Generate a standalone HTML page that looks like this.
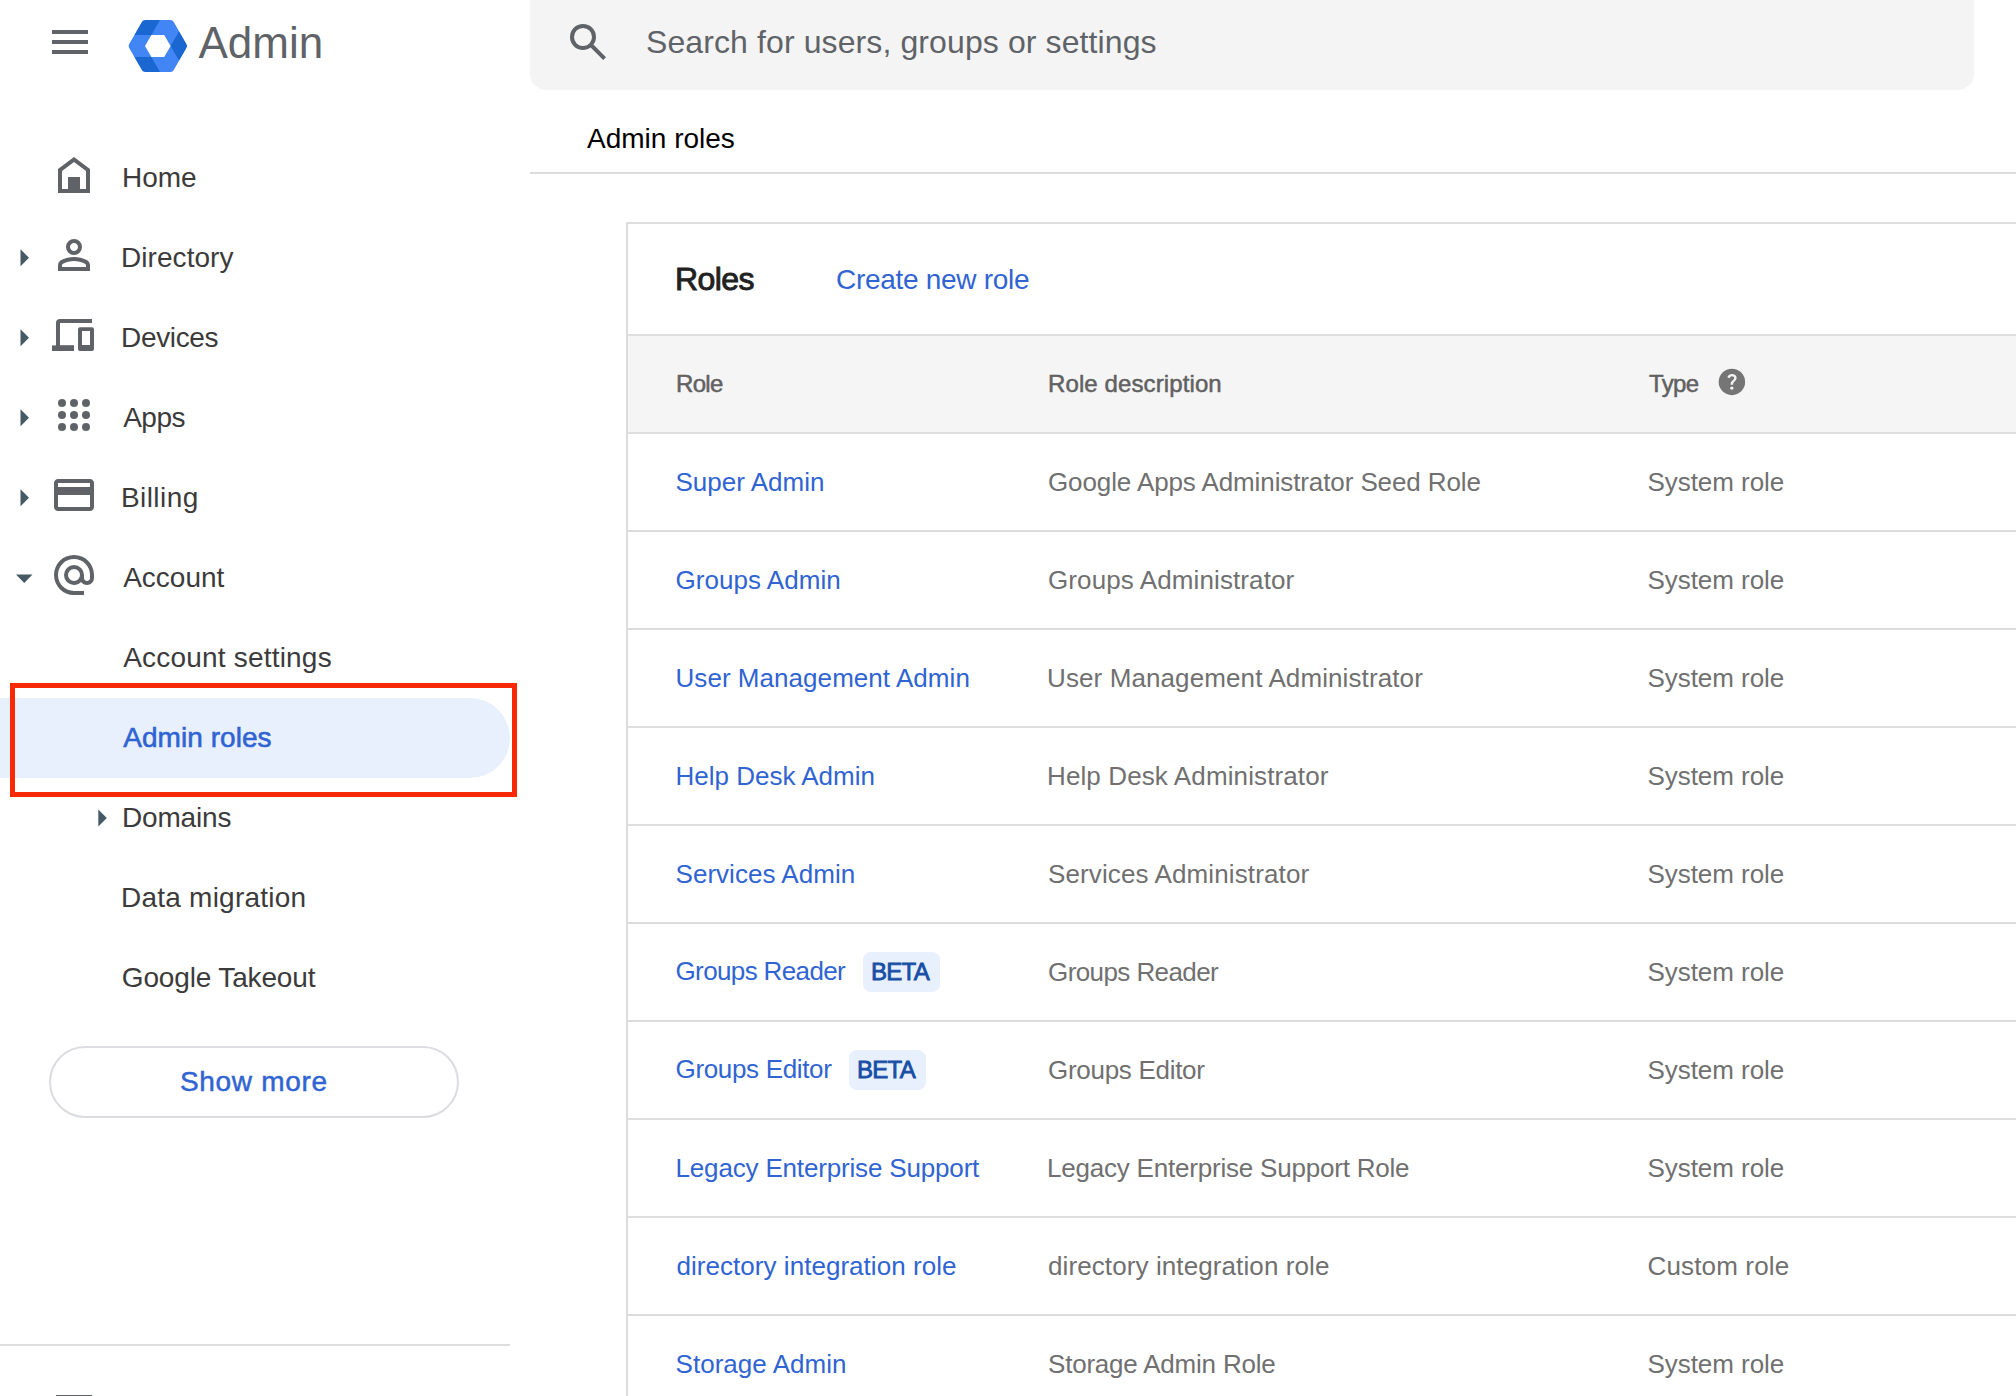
<!DOCTYPE html>
<html><head><meta charset="utf-8">
<style>
html,body{margin:0;padding:0;background:#fff;}
body{width:2016px;height:1396px;position:relative;overflow:hidden;font-family:"Liberation Sans",sans-serif;}
.a{position:absolute;}
.t{position:absolute;white-space:nowrap;line-height:normal;}
</style></head><body>
<div class="a" style="left:52px;top:30px;width:36px;height:4px;background:#5f6368;"></div>
<div class="a" style="left:52px;top:40px;width:36px;height:4px;background:#5f6368;"></div>
<div class="a" style="left:52px;top:50px;width:36px;height:4px;background:#5f6368;"></div>
<svg class="a" style="left:0;top:0" width="220" height="100" viewBox="0 0 220 100">
<defs><mask id="hm" maskUnits="userSpaceOnUse" x="0" y="0" width="220" height="100">
<polygon points="183.08,46.00 170.44,24.11 145.16,24.11 132.52,46.00 145.16,67.89 170.44,67.89" fill="#fff" stroke="#fff" stroke-width="8" stroke-linejoin="round"/>
<polygon points="170.60,46.00 164.20,34.91 151.40,34.91 145.00,46.00 151.40,57.09 164.20,57.09" fill="#000"/>
</mask></defs>
<g mask="url(#hm)">
<polygon points="187.70,46.00 172.75,20.11 142.85,20.11 127.90,46.00 142.85,71.89 172.75,71.89" fill="#4285f4"/>
<polygon points="151.40,34.91 134.30,34.91 142.85,20.11 159.95,20.11" fill="#1a67d2"/><polygon points="170.60,46.00 179.15,31.19 187.70,46.00 179.15,60.81" fill="#1a67d2"/><polygon points="151.40,57.09 159.95,71.89 142.85,71.89 134.30,57.09" fill="#1a67d2"/>
</g></svg>
<div class="t" id="t1" style="left:198.50px;top:17.88px;font-size:44px;color:#5f6368;letter-spacing:-0.000px;">Admin</div>
<div class="a" style="left:530px;top:-30px;width:1444px;height:120px;background:#f4f4f5;border-radius:16px"></div>
<svg class="a" style="left:564px;top:18px" width="48" height="48" viewBox="0 0 24 24"><path fill="#5f6368" d="M19.6 21l-6.3-6.3q-.75.6-1.725.95Q10.6 16 9.5 16q-2.725 0-4.612-1.887Q3 12.225 3 9.5q0-2.725 1.888-4.613Q6.775 3 9.5 3t4.613 1.887Q16 6.775 16 9.5q0 1.1-.35 2.075-.35.975-.95 1.725l6.3 6.3ZM9.5 14q1.875 0 3.188-1.312Q14 11.375 14 9.5q0-1.875-1.312-3.188Q11.375 5 9.5 5 7.625 5 6.312 6.312 5 7.625 5 9.5q0 1.875 1.312 3.188Q7.625 14 9.5 14Z"/></svg>
<div class="t" id="t2" style="left:646.00px;top:24.14px;font-size:32px;color:#5f6368;letter-spacing:0.104px;">Search for users, groups or settings</div>
<div class="t" id="t3" style="left:587.00px;top:122.76px;font-size:28px;color:#000;letter-spacing:-0.000px;">Admin roles</div>
<div class="a" style="left:530px;top:172px;width:1486px;height:2px;background:#dcdcdc;"></div>
<div class="a" style="left:0px;top:698px;width:510px;height:80px;background:#e8f0fe;border-radius:0 40px 40px 0"></div>
<div class="t" id="t4" style="left:122.00px;top:161.56px;font-size:28px;color:#3b3b3b;letter-spacing:0.000px;">Home</div>
<div class="t" id="t5" style="left:121.00px;top:241.56px;font-size:28px;color:#3b3b3b;letter-spacing:0.062px;">Directory</div>
<div class="t" id="t6" style="left:121.00px;top:321.56px;font-size:28px;color:#3b3b3b;letter-spacing:-0.333px;">Devices</div>
<div class="t" id="t7" style="left:123.20px;top:401.56px;font-size:28px;color:#3b3b3b;letter-spacing:-0.500px;">Apps</div>
<div class="t" id="t8" style="left:121.00px;top:481.56px;font-size:28px;color:#3b3b3b;letter-spacing:0.417px;">Billing</div>
<div class="t" id="t9" style="left:123.20px;top:561.56px;font-size:28px;color:#3b3b3b;letter-spacing:-0.000px;">Account</div>
<div class="t" id="t10" style="left:123.20px;top:641.56px;font-size:28px;color:#3b3b3b;letter-spacing:0.200px;">Account settings</div>
<div class="t" id="t11" style="left:123.20px;top:721.56px;font-size:28px;color:#3064d2;letter-spacing:0.050px;-webkit-text-stroke:0.6px #3064d2">Admin roles</div>
<div class="t" id="t12" style="left:122.00px;top:801.56px;font-size:28px;color:#3b3b3b;letter-spacing:-0.167px;">Domains</div>
<div class="t" id="t13" style="left:121.00px;top:881.56px;font-size:28px;color:#3b3b3b;letter-spacing:0.231px;">Data migration</div>
<div class="t" id="t14" style="left:121.80px;top:961.56px;font-size:28px;color:#3b3b3b;letter-spacing:-0.154px;">Google Takeout</div>
<svg class="a" style="left:50px;top:151px" width="48" height="48" viewBox="0 0 24 24"><g fill="#5f6368"><path fill-rule="evenodd" d="M4 21V9L12 3L20 9V21Z M6 19H9V13H15V19H18V10L12 5.5L6 10Z"/></g></svg>
<svg class="a" style="left:50px;top:231px" width="48" height="48" viewBox="0 0 24 24"><g fill="#5f6368"><path d="M12 12q-1.65 0-2.825-1.175Q8 9.65 8 8q0-1.65 1.175-2.825Q10.35 4 12 4q1.65 0 2.825 1.175Q16 6.35 16 8q0 1.65-1.175 2.825Q13.65 12 12 12Zm-8 8v-2.8q0-.85.438-1.563.437-.712 1.162-1.087 1.55-.775 3.15-1.163Q10.35 13 12 13t3.25.387q1.6.388 3.15 1.163.725.375 1.163 1.087Q20 16.35 20 17.2V20Zm2-2h12v-.8q0-.275-.137-.5-.138-.225-.363-.35-1.35-.675-2.725-1.013Q13.4 15 12 15t-2.775.337Q7.85 15.675 6.5 16.35q-.225.125-.362.35Q6 16.925 6 17.2Zm6-8q.825 0 1.413-.588Q14 8.825 14 8t-.587-1.412Q12.825 6 12 6q-.825 0-1.412.588Q10 7.175 10 8t.588 1.412Q11.175 10 12 10Z"/></g></svg>
<svg class="a" style="left:50px;top:311px" width="48" height="48" viewBox="0 0 24 24"><g fill="#5f6368"><path d="M3 20V6Q3 4 5 4H21V6H5V17.2H12V20Z"/><path d="M1 17.2H12V20H1Z"/><path fill-rule="evenodd" d="M15 8.1H21Q22 8.1 22 9.1V19Q22 20 21 20H15Q14 20 14 19V9.1Q14 8.1 15 8.1Z M16 10V17H20V10Z"/></g></svg>
<svg class="a" style="left:50px;top:391px" width="48" height="48" viewBox="0 0 24 24"><g fill="#5f6368"><circle cx="6" cy="6" r="2"/><circle cx="6" cy="12" r="2"/><circle cx="6" cy="18" r="2"/><circle cx="12" cy="6" r="2"/><circle cx="12" cy="12" r="2"/><circle cx="12" cy="18" r="2"/><circle cx="18" cy="6" r="2"/><circle cx="18" cy="12" r="2"/><circle cx="18" cy="18" r="2"/></g></svg>
<svg class="a" style="left:50px;top:471px" width="48" height="48" viewBox="0 0 24 24"><g fill="#5f6368"><path d="M22 6v12q0 .825-.587 1.413Q20.825 20 20 20H4q-.825 0-1.412-.587Q2 18.825 2 18V6q0-.825.588-1.412Q3.175 4 4 4h16q.825 0 1.413.588Q22 5.175 22 6ZM4 8h16V6H4Zm0 4v6h16v-6Z"/></g></svg>
<svg class="a" style="left:50px;top:551px" width="48" height="48" viewBox="0 0 24 24"><g fill="#5f6368"><path d="M12 22q-2.075 0-3.9-.788-1.825-.787-3.175-2.137-1.35-1.35-2.137-3.175Q2 14.075 2 12t.788-3.9q.787-1.825 2.137-3.175 1.35-1.35 3.175-2.137Q9.925 2 12 2t3.9.788q1.825.787 3.175 2.137 1.35 1.35 2.137 3.175Q22 9.925 22 12v1.45q0 1.475-1.012 2.512Q19.975 17 18.5 17q-.875 0-1.65-.375-.775-.375-1.3-1.075-.725.725-1.638 1.088Q13 17 12 17q-2.075 0-3.537-1.463Q7 14.075 7 12t1.463-3.538Q9.925 7 12 7t3.538 1.462Q17 9.925 17 12v1.45q0 .65.425 1.1.425.45 1.075.45.65 0 1.075-.45.425-.45.425-1.1V12q0-3.35-2.325-5.675Q15.35 4 12 4 8.65 4 6.325 6.325 4 8.65 4 12q0 3.35 2.325 5.675Q8.65 20 12 20h5v2Zm0-7q1.25 0 2.125-.875T15 12q0-1.25-.875-2.125T12 9q-1.25 0-2.125.875T9 12q0 1.25.875 2.125T12 15Z"/></g></svg>
<svg class="a" style="left:0;top:0" width="520" height="900" viewBox="0 0 520 900"><polygon points="20.5,249.3 29,257.8 20.5,266.3" fill="#455a64"/><polygon points="20.5,329.3 29,337.8 20.5,346.3" fill="#455a64"/><polygon points="20.5,409.3 29,417.8 20.5,426.3" fill="#455a64"/><polygon points="20.5,489.3 29,497.8 20.5,506.3" fill="#455a64"/><polygon points="16,574.45 32.5,574.45 24.25,582.95" fill="#455a64"/><polygon points="98.3,809.5 106.8,818 98.3,826.5" fill="#455a64"/></svg>
<div class="a" style="left:10px;top:683px;width:497px;height:104px;border:5px solid #f82a06"></div>
<div class="a" style="left:49px;top:1046px;width:406px;height:68px;border:2px solid #dadce0;border-radius:36px"></div>
<div class="t" id="t15" style="left:179.90px;top:1065.66px;font-size:28px;color:#3064d2;letter-spacing:0.688px;-webkit-text-stroke:0.5px #3064d2;">Show more</div>
<div class="a" style="left:0px;top:1344px;width:510px;height:2px;background:#dcdcdc;"></div>
<div class="a" style="left:56px;top:1395px;width:36px;height:1px;background:#5f6368;"></div>
<div class="a" style="left:626px;top:222px;width:1390px;height:2px;background:#dcdcdc;"></div>
<div class="a" style="left:626px;top:222px;width:2px;height:1200px;background:#dcdcdc;"></div>
<div class="t" id="t16" style="left:675.00px;top:261.04px;font-size:32px;color:#212121;letter-spacing:-0.550px;-webkit-text-stroke:0.9px #212121;">Roles</div>
<div class="t" id="t17" style="left:836.00px;top:264.06px;font-size:28px;color:#3064d2;letter-spacing:-0.300px;">Create new role</div>
<div class="a" style="left:628px;top:336px;width:1388px;height:96px;background:#f5f5f5;"></div>
<div class="a" style="left:628px;top:334px;width:1388px;height:2px;background:#dcdcdc;"></div>
<div class="a" style="left:628px;top:432px;width:1388px;height:2px;background:#dcdcdc;"></div>
<div class="t" id="t18" style="left:676.00px;top:370.28px;font-size:24px;color:#616161;letter-spacing:-0.700px;-webkit-text-stroke:0.5px #616161">Role</div>
<div class="t" id="t19" style="left:1048.00px;top:370.28px;font-size:24px;color:#616161;letter-spacing:0.107px;-webkit-text-stroke:0.5px #616161">Role description</div>
<div class="t" id="t20" style="left:1649.10px;top:370.28px;font-size:24px;color:#616161;letter-spacing:-0.700px;-webkit-text-stroke:0.5px #616161">Type</div>
<svg class="a" style="left:1715.9px;top:366.1px" width="31.8" height="31.8" viewBox="0 0 24 24"><path fill="#757575" d="M11.95 18q.525 0 .888-.363.362-.362.362-.887t-.362-.888q-.363-.362-.888-.362t-.887.362q-.363.363-.363.888t.363.887q.362.363.887.363Zm-.9-3.85h1.85q0-.825.188-1.3.187-.475 1.062-1.3.65-.65 1.025-1.238.375-.587.375-1.412 0-1.4-1.025-2.15T12.1 6q-1.425 0-2.312.75-.888.75-1.238 1.8l1.650.65q.125-.45.563-.975Q11.2 7.7 12.1 7.7q.8 0 1.2.437.4.438.4.963 0 .5-.3.937-.3.438-.75.813-1.1.975-1.35 1.475-.25.5-.25 1.825ZM12 22q-2.075 0-3.900-.788-1.825-.787-3.175-2.137-1.35-1.35-2.137-3.175Q2 14.075 2 12t.788-3.9q.787-1.825 2.137-3.175 1.35-1.35 3.175-2.137Q9.925 2 12 2t3.9.788q1.825.787 3.175 2.137 1.35 1.35 2.137 3.175Q22 9.925 22 12t-.788 3.9q-.787 1.825-2.137 3.175-1.35 1.35-3.175 2.137Q14.075 22 12 22Z"/></svg>
<div class="t" id="t21" style="left:675.50px;top:467.47px;font-size:26px;color:#3064d2;letter-spacing:0.000px;">Super Admin</div>
<div class="t" id="t22" style="left:1048.00px;top:467.47px;font-size:26px;color:#707070;letter-spacing:-0.103px;">Google Apps Administrator Seed Role</div>
<div class="t" id="t23" style="left:1647.50px;top:467.47px;font-size:26px;color:#707070;letter-spacing:-0.050px;">System role</div>
<div class="t" id="t24" style="left:675.50px;top:565.47px;font-size:26px;color:#3064d2;letter-spacing:0.045px;">Groups Admin</div>
<div class="t" id="t25" style="left:1048.00px;top:565.47px;font-size:26px;color:#707070;letter-spacing:0.105px;">Groups Administrator</div>
<div class="t" id="t26" style="left:1647.50px;top:565.47px;font-size:26px;color:#707070;letter-spacing:-0.050px;">System role</div>
<div class="a" style="left:628px;top:530px;width:1388px;height:2px;background:#dcdcdc;"></div>
<div class="t" id="t27" style="left:675.50px;top:663.47px;font-size:26px;color:#3064d2;letter-spacing:0.050px;">User Management Admin</div>
<div class="t" id="t28" style="left:1047.00px;top:663.47px;font-size:26px;color:#707070;letter-spacing:0.107px;">User Management Administrator</div>
<div class="t" id="t29" style="left:1647.50px;top:663.47px;font-size:26px;color:#707070;letter-spacing:-0.050px;">System role</div>
<div class="a" style="left:628px;top:628px;width:1388px;height:2px;background:#dcdcdc;"></div>
<div class="t" id="t30" style="left:675.50px;top:761.47px;font-size:26px;color:#3064d2;letter-spacing:0.000px;">Help Desk Admin</div>
<div class="t" id="t31" style="left:1047.00px;top:761.47px;font-size:26px;color:#707070;letter-spacing:0.114px;">Help Desk Administrator</div>
<div class="t" id="t32" style="left:1647.50px;top:761.47px;font-size:26px;color:#707070;letter-spacing:-0.050px;">System role</div>
<div class="a" style="left:628px;top:726px;width:1388px;height:2px;background:#dcdcdc;"></div>
<div class="t" id="t33" style="left:675.50px;top:859.47px;font-size:26px;color:#3064d2;letter-spacing:0.038px;">Services Admin</div>
<div class="t" id="t34" style="left:1048.00px;top:859.47px;font-size:26px;color:#707070;letter-spacing:0.119px;">Services Administrator</div>
<div class="t" id="t35" style="left:1647.50px;top:859.47px;font-size:26px;color:#707070;letter-spacing:-0.050px;">System role</div>
<div class="a" style="left:628px;top:824px;width:1388px;height:2px;background:#dcdcdc;"></div>
<div class="t" id="t36" style="left:675.50px;top:955.97px;font-size:26px;color:#3064d2;letter-spacing:-0.625px;">Groups Reader</div>
<div class="a" style="left:863px;top:952px;width:77px;height:40px;background:#e8f0fe;border-radius:8px"></div>
<div class="t" id="t37" style="left:870.90px;top:958.28px;font-size:24px;color:#174ea6;letter-spacing:-0.667px;-webkit-text-stroke:0.8px #174ea6;">BETA</div>
<div class="t" id="t38" style="left:1048.00px;top:957.47px;font-size:26px;color:#707070;letter-spacing:-0.583px;">Groups Reader</div>
<div class="t" id="t39" style="left:1647.50px;top:957.47px;font-size:26px;color:#707070;letter-spacing:-0.050px;">System role</div>
<div class="a" style="left:628px;top:922px;width:1388px;height:2px;background:#dcdcdc;"></div>
<div class="t" id="t40" style="left:675.50px;top:1053.97px;font-size:26px;color:#3064d2;letter-spacing:-0.333px;">Groups Editor</div>
<div class="a" style="left:849px;top:1050px;width:77px;height:40px;background:#e8f0fe;border-radius:8px"></div>
<div class="t" id="t41" style="left:856.90px;top:1056.28px;font-size:24px;color:#174ea6;letter-spacing:-0.667px;-webkit-text-stroke:0.8px #174ea6;">BETA</div>
<div class="t" id="t42" style="left:1048.00px;top:1055.47px;font-size:26px;color:#707070;letter-spacing:-0.292px;">Groups Editor</div>
<div class="t" id="t43" style="left:1647.50px;top:1055.47px;font-size:26px;color:#707070;letter-spacing:-0.050px;">System role</div>
<div class="a" style="left:628px;top:1020px;width:1388px;height:2px;background:#dcdcdc;"></div>
<div class="t" id="t44" style="left:675.50px;top:1153.47px;font-size:26px;color:#3064d2;letter-spacing:-0.167px;">Legacy Enterprise Support</div>
<div class="t" id="t45" style="left:1047.00px;top:1153.47px;font-size:26px;color:#707070;letter-spacing:-0.207px;">Legacy Enterprise Support Role</div>
<div class="t" id="t46" style="left:1647.50px;top:1153.47px;font-size:26px;color:#707070;letter-spacing:-0.050px;">System role</div>
<div class="a" style="left:628px;top:1118px;width:1388px;height:2px;background:#dcdcdc;"></div>
<div class="t" id="t47" style="left:676.50px;top:1251.47px;font-size:26px;color:#3064d2;letter-spacing:0.040px;">directory integration role</div>
<div class="t" id="t48" style="left:1048.00px;top:1251.47px;font-size:26px;color:#707070;letter-spacing:0.100px;">directory integration role</div>
<div class="t" id="t49" style="left:1647.50px;top:1251.47px;font-size:26px;color:#707070;letter-spacing:0.150px;">Custom role</div>
<div class="a" style="left:628px;top:1216px;width:1388px;height:2px;background:#dcdcdc;"></div>
<div class="t" id="t50" style="left:675.50px;top:1349.47px;font-size:26px;color:#3064d2;letter-spacing:0.042px;">Storage Admin</div>
<div class="t" id="t51" style="left:1048.00px;top:1349.47px;font-size:26px;color:#707070;letter-spacing:-0.206px;">Storage Admin Role</div>
<div class="t" id="t52" style="left:1647.50px;top:1349.47px;font-size:26px;color:#707070;letter-spacing:-0.050px;">System role</div>
<div class="a" style="left:628px;top:1314px;width:1388px;height:2px;background:#dcdcdc;"></div>
</body></html>
